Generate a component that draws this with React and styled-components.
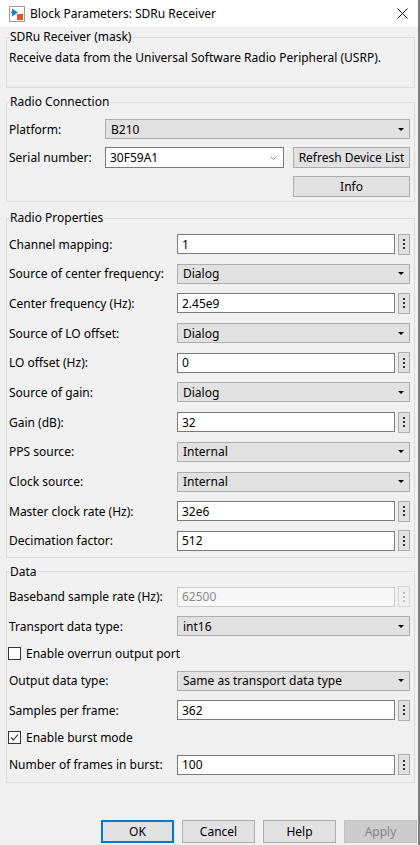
import React from 'react'
import styled, { createGlobalStyle } from 'styled-components'

const GlobalStyle = createGlobalStyle`
  html, body {
    margin: 0;
    padding: 0;
    background: #f0f0f0;
  }
  body {
    font-family: "Noto Sans", "Open Sans", sans-serif;
    font-size: 12px;
    color: #000;
  }
`

const Window = styled.div`
  width: 420px;
  height: 845px;
  box-sizing: border-box;
  border-right: 2px solid #7c7c7c;
  background: #f0f0f0;
  display: flex;
  flex-direction: column;
  overflow: hidden;
`

const TitleBar = styled.div`
  height: 27px;
  flex: none;
  background: #fff;
  display: flex;
  align-items: center;
  padding: 0 10px 0 9px;
  gap: 5px;
`

const TitleText = styled.span`
  flex: 1;
  font-size: 12px;
`

const CloseButton = styled.div`
  width: 12px;
  height: 12px;
  display: flex;
  align-items: center;
  justify-content: center;
`

const Content = styled.div`
  padding: 2px 3px 0 6px;
  display: flex;
  flex-direction: column;
  gap: 6px;
`

const Group = styled.fieldset`
  margin: ${p => p.$mt || 0}px 0 0 0;
  min-width: 0;
  border: 1px solid #dcdcdc;
  padding: ${p => p.$pad || '0 4px 4px 2px'};
  display: flex;
  flex-direction: column;
  gap: ${p => p.$gap || '8px'};
`

const Legend = styled.legend`
  padding: 0 1px;
  margin-left: 0;
  line-height: 16px;
`

const Description = styled.div`
  margin-top: 5px;
  line-height: 16px;
  white-space: nowrap;
`

const Row = styled.div`
  display: flex;
  align-items: center;
  justify-content: ${p => (p.$end ? 'flex-end' : 'flex-start')};
  height: ${p => p.$h || 20}px;
  margin-top: ${p => p.$mt || 0}px;
`

const Label = styled.div`
  width: ${p => p.$w}px;
  flex: none;
  white-space: nowrap;
`

const TextBox = styled.div`
  flex: 1;
  height: 20px;
  box-sizing: border-box;
  border: 1px solid ${p => (p.$disabled ? '#cccccc' : '#7a7a7a')};
  background: ${p => (p.$disabled ? '#f7f7f7' : '#fff')};
  color: ${p => (p.$disabled ? '#8a8a8a' : '#000')};
  display: flex;
  align-items: center;
  padding-left: 4px;
`

const DotsButton = styled.div`
  width: 12px;
  height: 21px;
  margin-left: 3px;
  box-sizing: border-box;
  border: 1px solid ${p => (p.$disabled ? '#d6d6d6' : '#adadad')};
  background: ${p => (p.$disabled ? '#f0f0f0' : '#e1e1e1')};
  display: flex;
  flex-direction: column;
  align-items: center;
  justify-content: center;
  gap: 2px;
`

const Dot = styled.span`
  width: 2px;
  height: 2px;
  background: ${p => (p.$disabled ? '#bdbdbd' : '#333')};
`

const Select = styled.div`
  flex: 1;
  height: 20px;
  box-sizing: border-box;
  border: 1px solid #adadad;
  background: #e1e1e1;
  display: flex;
  align-items: center;
  padding: 0 5px 0 5px;
`

const SelectValue = styled.span`
  flex: 1;
`

const Caret = styled.span`
  width: 0;
  height: 0;
  border-left: 3px solid transparent;
  border-right: 3px solid transparent;
  border-top: 3px solid #000;
`

const Combo = styled.div`
  width: 179px;
  height: 21px;
  box-sizing: border-box;
  border: 1px solid #7a7a7a;
  background: #fff;
  display: flex;
  align-items: center;
  padding: 0 6px 0 4px;
`

const Button = styled.div`
  width: ${p => p.$w || 73}px;
  height: ${p => p.$h || 23}px;
  box-sizing: border-box;
  margin-left: ${p => p.$ml || 0}px;
  border: 1px solid ${p => (p.$primary ? '#0078d7' : p.$disabled ? '#bfbfbf' : '#adadad')};
  box-shadow: ${p => (p.$primary ? 'inset 0 0 0 1px #0078d7' : 'none')};
  background: ${p => (p.$disabled ? '#cccccc' : '#e1e1e1')};
  color: ${p => (p.$disabled ? '#838383' : '#000')};
  display: flex;
  align-items: center;
  justify-content: center;
  white-space: nowrap;
`

const CheckRow = styled.label`
  display: flex;
  align-items: center;
  height: 15.5px;
  gap: 5px;
  margin-left: -1px;
`

const CheckBox = styled.span`
  width: 13px;
  height: 13px;
  box-sizing: border-box;
  border: 1px solid #333;
  background: #fff;
  display: flex;
  align-items: center;
  justify-content: center;
`

const Footer = styled.div`
  margin-top: auto;
  display: flex;
  justify-content: flex-end;
  gap: 8px;
  padding: 0 1px 2px 0;
`

const BlockIcon = () => (
  <svg width="16" height="16" viewBox="0 0 16 16">
    <rect x="0.5" y="0.5" width="15" height="15" fill="#fff" stroke="#9a9a9a" />
    <path d="M3 2.5 L9 6.5 L3 10.5 Z" fill="#1f7fd1" />
    <line x1="2" y1="6.5" x2="3" y2="6.5" stroke="#1f7fd1" />
    <rect x="8" y="8" width="6" height="6" fill="#e8501e" />
  </svg>
)

const CloseIcon = () => (
  <svg width="11" height="11" viewBox="0 0 11 11">
    <path d="M0.5 0.5 L10.5 10.5 M10.5 0.5 L0.5 10.5" stroke="#111" strokeWidth="1" />
  </svg>
)

const Chevron = () => (
  <svg width="7" height="4" viewBox="0 0 7 4">
    <polyline points="0.5,0.5 3.5,3.5 6.5,0.5" fill="none" stroke="#9a9a9a" strokeWidth="1" />
  </svg>
)

const Check = () => (
  <svg width="11" height="11" viewBox="0 0 11 11">
    <polyline points="2,5.5 4.5,8 9,2.5" fill="none" stroke="#222" strokeWidth="1.1" />
  </svg>
)

const Dots = ({ disabled }) => (
  <DotsButton $disabled={disabled}>
    <Dot $disabled={disabled} />
    <Dot $disabled={disabled} />
    <Dot $disabled={disabled} />
  </DotsButton>
)

const EditField = ({ label, value, w = 168, disabled, mt }) => (
  <Row $mt={mt}>
    <Label $w={w}>{label}</Label>
    <TextBox $disabled={disabled}>{value}</TextBox>
    <Dots disabled={disabled} />
  </Row>
)

const PopupField = ({ label, value, w = 168, mt }) => (
  <Row $mt={mt}>
    <Label $w={w}>{label}</Label>
    <Select>
      <SelectValue>{value}</SelectValue>
      <Caret />
    </Select>
  </Row>
)

const CheckField = ({ label, checked }) => (
  <CheckRow>
    <CheckBox>{checked && <Check />}</CheckBox>
    {label}
  </CheckRow>
)

const App = () => {
  return (
    <>
      <GlobalStyle />
      <Window>
        <TitleBar>
          <BlockIcon />
          <TitleText>Block Parameters: SDRu Receiver</TitleText>
          <CloseButton><CloseIcon /></CloseButton>
        </TitleBar>

        <Content>
          <Group $pad="0 4px 21px 2px">
            <Legend>SDRu Receiver (mask)</Legend>
            <Description>Receive data from the Universal Software Radio Peripheral (USRP).</Description>
          </Group>

          <Group $pad="0 4px 4px 2px">
            <Legend>Radio Connection</Legend>
            <PopupField label="Platform:" value="B210" w={96} mt={9} />
            <Row $h={21}>
              <Label $w={96}>Serial number:</Label>
              <Combo>
                <SelectValue>30F59A1</SelectValue>
                <Chevron />
              </Combo>
              <Button $w={117} $h={21} $ml={9}>Refresh Device List</Button>
            </Row>
            <Row $h={21} $end>
              <Button $w={117} $h={21}>Info</Button>
            </Row>
          </Group>

          <Group $mt={2} $pad="0 4px 6px 2px" $gap="9.7px">
            <Legend>Radio Properties</Legend>
            <EditField label="Channel mapping:" value="1" mt={8} />
            <PopupField label="Source of center frequency:" value="Dialog" />
            <EditField label="Center frequency (Hz):" value="2.45e9" />
            <PopupField label="Source of LO offset:" value="Dialog" />
            <EditField label="LO offset (Hz):" value="0" />
            <PopupField label="Source of gain:" value="Dialog" />
            <EditField label="Gain (dB):" value="32" />
            <PopupField label="PPS source:" value="Internal" />
            <PopupField label="Clock source:" value="Internal" />
            <EditField label="Master clock rate (Hz):" value="32e6" />
            <EditField label="Decimation factor:" value="512" />
          </Group>

          <Group $pad="0 4px 7px 2px" $gap="9.5px">
            <Legend>Data</Legend>
            <EditField label="Baseband sample rate (Hz):" value="62500" disabled mt={7} />
            <PopupField label="Transport data type:" value="int16" />
            <CheckField label="Enable overrun output port" />
            <PopupField label="Output data type:" value="Same as transport data type" />
            <EditField label="Samples per frame:" value="362" />
            <CheckField label="Enable burst mode" checked />
            <EditField label="Number of frames in burst:" value="100" />
          </Group>
        </Content>

        <Footer>
          <Button $primary>OK</Button>
          <Button>Cancel</Button>
          <Button>Help</Button>
          <Button $disabled>Apply</Button>
        </Footer>
      </Window>
    </>
  )
}

export default App
